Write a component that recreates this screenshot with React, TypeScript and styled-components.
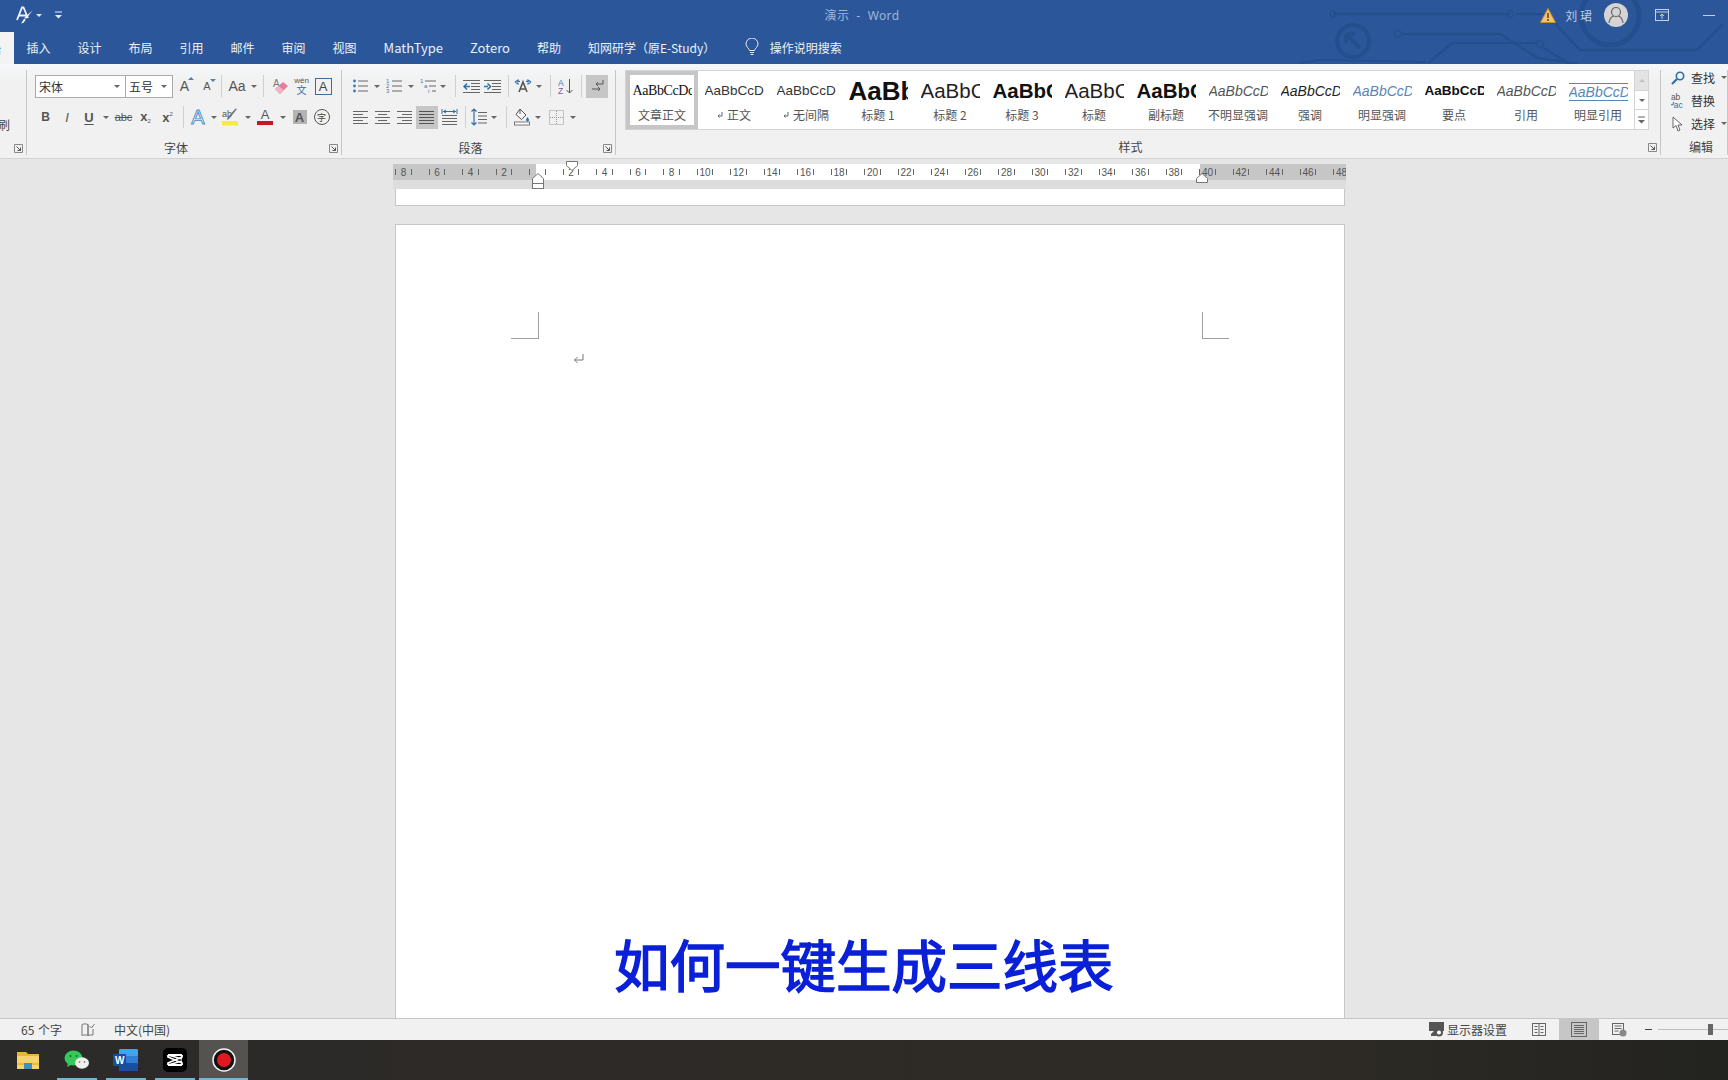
import React from "react";
import styled, { createGlobalStyle } from "styled-components";

const SANS = `"Noto Sans CJK SC", "Noto Sans", sans-serif`;
const LATIN = `"Liberation Sans", "Noto Sans CJK SC", sans-serif`;

const GlobalStyle = createGlobalStyle`
  html, body {
    margin: 0;
    padding: 0;
    overflow: hidden;
    background: #e6e6e6;
    font-family: ${SANS};
  }
  svg { display: block; }
`;

const TABS = ["插入", "设计", "布局", "引用", "邮件", "审阅", "视图", "MathType", "Zotero", "帮助", "知网研学（原E-Study）"];

const STYLES = [
  { label: "文章正文", sample: "AaBbCcDd", kind: "serif" },
  { label: "正文", sample: "AaBbCcDd", kind: "plain", mark: true },
  { label: "无间隔", sample: "AaBbCcDd", kind: "plain", mark: true },
  { label: "标题 1", sample: "AaBbC", kind: "h1" },
  { label: "标题 2", sample: "AaBbC", kind: "h2" },
  { label: "标题 3", sample: "AaBbC", kind: "h3" },
  { label: "标题", sample: "AaBbC", kind: "h2" },
  { label: "副标题", sample: "AaBbC", kind: "h3" },
  { label: "不明显强调", sample: "AaBbCcDd", kind: "subtle" },
  { label: "强调", sample: "AaBbCcDd", kind: "em" },
  { label: "明显强调", sample: "AaBbCcDd", kind: "blue" },
  { label: "要点", sample: "AaBbCcDd", kind: "strong" },
  { label: "引用", sample: "AaBbCcDd", kind: "subtle" },
  { label: "明显引用", sample: "AaBbCcDd", kind: "quote" },
];

const RULER = [8, 6, 4, 2, 0, ...Array.from({ length: 24 }, (_, i) => (i + 1) * 2)];

/* ---------- layout ---------- */

const Screen = styled.div`
  width: 1728px;
  height: 1080px;
  display: flex;
  flex-direction: column;
  overflow: hidden;
  background: #e6e6e6;
`;

const Header = styled.header`
  position: relative;
  height: 64px;
  flex: none;
  background: #2b579a;
`;

const Circuit = styled.svg`
  position: absolute;
  right: 0;
  top: 0;
`;

const TitleRow = styled.div`
  position: relative;
  height: 30px;
  margin-bottom: 2px;
  display: grid;
  grid-template-columns: 1fr auto 1fr;
  align-items: center;
`;

const QuickAccess = styled.div`
  display: flex;
  align-items: center;
  padding-left: 16px;
`;

const DocTitle = styled.div`
  font-size: 12px;
  color: #9fb5d6;
  letter-spacing: 0.4px;
  margin-right: 4px;
  white-space: pre;
  font-family: "Noto Sans", "Noto Sans CJK SC", sans-serif;
`;

const Account = styled.div`
  display: flex;
  align-items: center;
  justify-content: flex-end;
  padding-right: 13px;
`;

const UserName = styled.span`
  font-size: 12px;
  color: #b9cbe4;
  margin: 0 12px 0 9px;
  white-space: pre;
`;

const Avatar = styled.div`
  width: 24px;
  height: 24px;
  border-radius: 50%;
  background: #d4d4d4;
  display: flex;
  align-items: center;
  justify-content: center;
  margin-right: 27px;
`;

const Minimize = styled.div`
  width: 12px;
  height: 1px;
  background: #c4d2e6;
  margin-left: 34px;
`;

const TabRow = styled.nav`
  position: relative;
  height: 32px;
  box-sizing: border-box;
  display: flex;
  align-items: center;
`;

const HomeTab = styled.div`
  width: 14px;
  height: 100%;
  background: #f3f3f3;
  overflow: hidden;
  display: flex;
  align-items: center;
  font-size: 12px;
  color: #2b579a;
  margin-right: -1px;
  span {
    margin-left: -11px;
  }
`;

const Tab = styled.div<{ $latin?: boolean }>`
  padding: 0 13.5px 2px;
  font-size: ${(p) => (p.$latin ? "13px" : "12px")};
  color: #eef2f8;
  white-space: nowrap;
`;

const SearchHint = styled.div`
  display: flex;
  align-items: center;
  gap: 11px;
  margin-left: 16px;
  padding-bottom: 2px;
  font-size: 12px;
  color: #eef2f8;
`;

const Ribbon = styled.section`
  height: 95px;
  flex: none;
  display: flex;
  background: linear-gradient(#f5f7f9, #f1f1f1 20%);
  border-bottom: 1px solid #d2d2d2;
  box-sizing: border-box;
  color: #444;
`;

const Group = styled.div<{ $w: number; $left?: number }>`
  width: ${(p) => p.$w}px;
  flex: none;
  box-sizing: border-box;
  position: relative;
  display: flex;
  flex-direction: column;
  padding: 11px 0 0 ${(p) => p.$left ?? 0}px;
  &::after {
    content: "";
    position: absolute;
    right: 0;
    top: 6px;
    bottom: 3px;
    width: 1px;
    background: #c6c6c6;
  }
`;

const ToolRow = styled.div`
  height: 22px;
  display: flex;
  align-items: center;
  & + & {
    margin-top: 9px;
  }
`;

const GroupFoot = styled.div<{ $top?: number }>`
  height: 18px;
  margin-top: ${(p) => p.$top ?? 11}px;
  margin-right: 1px;
  display: flex;
  align-items: center;
`;

const GroupLabel = styled.div`
  flex: 1;
  text-align: center;
  font-size: 12px;
  color: #444;
  padding-right: 8px;
  margin-top: -2px;
`;

const Launcher = styled.div`
  width: 16px;
  flex: none;
  display: flex;
  justify-content: center;
`;

const ClippedLabel = styled.div`
  height: 22px;
  margin-top: 39px;
  font-size: 12px;
  line-height: 22px;
  color: #444;
  overflow: hidden;
  direction: rtl;
  padding-right: 17px;
`;

const Combo = styled.div<{ $w: number }>`
  width: ${(p) => p.$w}px;
  height: 23px;
  box-sizing: border-box;
  border: 1px solid #ababab;
  background: #fff;
  display: flex;
  align-items: center;
  justify-content: space-between;
  padding: 0 5px 0 3px;
  font-size: 12px;
  color: #333;
  & + & {
    margin-left: -1px;
  }
`;

const Tool = styled.div<{ $w?: number; $on?: boolean }>`
  width: ${(p) => p.$w ?? 22}px;
  height: 23px;
  flex: none;
  display: flex;
  align-items: center;
  justify-content: center;
  background: ${(p) => (p.$on ? "#c6c6c6" : "transparent")};
`;

const Caret = styled.i`
  display: block;
  width: 0;
  height: 0;
  border-left: 3px solid transparent;
  border-right: 3px solid transparent;
  border-top: 3px solid #666;
`;

const Sep = styled.i`
  display: block;
  width: 1px;
  height: 22px;
  background: #d0d0d0;
`;

const Glyph = styled.span<{ $size?: number; $color?: string; $weight?: number; $italic?: boolean }>`
  font-family: ${LATIN};
  font-size: ${(p) => p.$size ?? 13}px;
  font-weight: ${(p) => p.$weight ?? 400};
  font-style: ${(p) => (p.$italic ? "italic" : "normal")};
  color: ${(p) => p.$color ?? "#555"};
  line-height: 1;
`;

const Grow = styled(Glyph)<{ $down?: boolean }>`
  position: relative;
  &::after {
    content: "";
    position: absolute;
    right: -5px;
    top: -2px;
    border-left: 3px solid transparent;
    border-right: 3px solid transparent;
    border-${(p) => (p.$down ? "top" : "bottom")}: 3px solid #5a7fa8;
  }
`;

const Sub = styled.sub`
  font-size: 6px;
  vertical-align: -2px;
  font-weight: 400;
`;

const Sup = styled.sup`
  font-size: 6px;
  vertical-align: 6px;
  font-weight: 400;
`;

const Strike = styled(Glyph)`
  font-size: 11px;
  text-decoration: line-through;
`;

const Under = styled(Glyph)`
  font-weight: 700;
  text-decoration: underline;
  text-underline-offset: 2px;
`;

const Wen = styled.div`
  display: flex;
  flex-direction: column;
  align-items: center;
  color: #2f6fa8;
  line-height: 10px;
  font-size: 10px;
  small {
    font-family: ${LATIN};
    font-size: 8px;
    line-height: 8px;
    color: #555;
  }
`;

const BoxedA = styled.div`
  width: 15px;
  height: 15px;
  border: 1px solid #3d6d9e;
  display: flex;
  align-items: center;
  justify-content: center;
  font-family: ${LATIN};
  font-size: 13px;
  color: #444;
`;

const GlowA = styled(Glyph)`
  font-size: 20px;
  color: #eaf2fa;
  -webkit-text-stroke: 0.9px #4f8cc6;
`;

const ColorA = styled.div`
  width: 16px;
  display: flex;
  flex-direction: column;
  align-items: center;
  font-family: ${LATIN};
  font-size: 13px;
  line-height: 12px;
  color: #555;
  &::after {
    content: "";
    width: 100%;
    height: 4px;
    background: #c5181f;
  }
`;

const ShadedA = styled.div`
  width: 14px;
  height: 14px;
  background: #b4b4b4;
  display: flex;
  align-items: center;
  justify-content: center;
  font-family: ${LATIN};
  font-size: 13px;
  font-weight: 700;
  color: #555;
`;

const Ringed = styled.div`
  width: 14px;
  height: 14px;
  border-radius: 50%;
  border: 1px solid #555;
  display: flex;
  align-items: center;
  justify-content: center;
  font-size: 9px;
  color: #444;
`;

const StylesBody = styled.div`
  display: flex;
  height: 60px;
  margin-top: -5px;
`;

const Gallery = styled.div`
  display: flex;
  box-sizing: border-box;
  background: #fff;
  border: 1px solid #d4d4d4;
  border-right: none;
`;

const StyleItem = styled.div<{ $on?: boolean }>`
  width: 72px;
  flex: none;
  display: flex;
  flex-direction: column;
  align-items: center;
  box-sizing: border-box;
  box-shadow: ${(p) => (p.$on ? "inset 0 0 0 4px #c6c6c6" : "none")};
`;

const SAMPLE_CSS: Record<string, string> = {
  serif: `font-family: "Liberation Serif", serif; font-size: 14px; color: #111; letter-spacing: -0.4px;`,
  plain: `font-size: 13.5px; color: #333;`,
  h1: `font-size: 26px; font-weight: 700; color: #111;`,
  h2: `font-size: 20.5px; color: #222;`,
  h3: `font-size: 20.5px; font-weight: 700; color: #111;`,
  subtle: `font-size: 14px; font-style: italic; color: #555;`,
  em: `font-size: 14px; font-style: italic; color: #222;`,
  blue: `font-size: 14px; font-style: italic; color: #5b85b5;`,
  strong: `font-size: 13.5px; font-weight: 700; color: #111;`,
  quote: `font-size: 14px; font-style: italic; color: #5b85b5; border-top: 1px solid #5b85b5; border-bottom: 1px solid #5b85b5; line-height: 16px !important; margin-top: 12px; height: 16px !important;`,
};

const Sample = styled.div<{ $kind: string }>`
  width: 59px;
  height: 36px;
  line-height: 40px;
  overflow: hidden;
  white-space: nowrap;
  font-family: ${LATIN};
  ${(p) => SAMPLE_CSS[p.$kind]}
`;

const SampleSlot = styled.div`
  height: 36px;
`;

const StyleLabel = styled.div`
  height: 16px;
  line-height: 16px;
  font-size: 12px;
  color: #555;
  white-space: nowrap;
  display: flex;
  align-items: center;
  gap: 4px;
  font-family: "Noto Sans CJK SC", "Noto Sans", sans-serif;
`;

const GalleryScroll = styled.div`
  width: 15px;
  display: flex;
  flex-direction: column;
  box-sizing: border-box;
  border: 1px solid #d4d4d4;
  background: #fff;
`;

const ScrollBtn = styled.div<{ $off?: boolean }>`
  flex: 1;
  display: flex;
  align-items: center;
  justify-content: center;
  background: ${(p) => (p.$off ? "#e4e4e4" : "#fff")};
  & + & {
    border-top: 1px solid #d4d4d4;
  }
`;

const EditList = styled.div`
  display: flex;
  flex-direction: column;
  margin-top: -9px;
  padding-left: 9px;
`;

const EditRow = styled.div`
  height: 23px;
  display: flex;
  align-items: center;
  gap: 6px;
  font-size: 12px;
  color: #333;
  white-space: nowrap;
`;

const EditIcon = styled.div`
  width: 15px;
  display: flex;
  justify-content: center;
`;

const EditFoot = styled.div`
  margin-top: 3px;
  height: 18px;
  line-height: 18px;
  text-align: center;
  font-size: 12px;
  color: #444;
  padding-left: 13px;
`;

const Workspace = styled.main`
  flex: 1;
  min-height: 0;
  overflow: hidden;
  padding-top: 5px;
  background: #e6e6e6;
`;

const Column = styled.div`
  position: relative;
  width: 953px;
  margin-left: 393px;
`;

const Ruler = styled.div`
  height: 16px;
  overflow: hidden;
  background: linear-gradient(90deg, #c6c6c6 143px, #fff 143px, #fff 807px, #c6c6c6 807px);
`;

const RulerTrack = styled.div`
  display: flex;
  margin-left: -6.25px;
  width: 1000px;
`;

const RulerCell = styled.div`
  width: 33.5px;
  height: 16px;
  flex: none;
  box-sizing: border-box;
  padding: 0 8.5px;
  display: flex;
  align-items: center;
  justify-content: space-between;
  font-family: ${LATIN};
  font-size: 10px;
  color: #555;
  i {
    display: block;
    width: 1px;
    height: 6px;
    background: #666;
  }
`;

const RulerShadow = styled.div`
  height: 9px;
  background: #dddddd;
`;

const Marker = styled.svg<{ $x: number; $y: number }>`
  position: absolute;
  left: ${(p) => p.$x}px;
  top: ${(p) => p.$y}px;
`;

const PageTail = styled.div`
  width: 950px;
  height: 17px;
  margin-left: 2px;
  box-sizing: border-box;
  background: #fff;
  border: 1px solid #c6c6c6;
  border-top: none;
`;

const Page = styled.div`
  position: relative;
  width: 950px;
  height: 900px;
  margin: 18px 0 0 2px;
  box-sizing: border-box;
  background: #fff;
  border: 1px solid #c6c6c6;
  padding: 87px 115px 0;
`;

const CropRow = styled.div`
  display: flex;
  justify-content: space-between;
`;

const CropMark = styled.div<{ $right?: boolean }>`
  width: ${(p) => (p.$right ? 27 : 28)}px;
  height: 27px;
  box-sizing: border-box;
  border-bottom: 1px solid #a0a0a0;
  border-${(p) => (p.$right ? "left" : "right")}: 1px solid #a0a0a0;
`;

const ParaMark = styled.div`
  margin: 15px 0 0 62px;
`;

const Caption = styled.div`
  position: absolute;
  left: 218px;
  top: 707px;
  font-size: 55.5px;
  line-height: 62px;
  font-weight: 400;
  color: #0a20d8;
  -webkit-text-stroke: 1.5px #0a20d8;
  white-space: nowrap;
`;

const StatusBar = styled.footer`
  height: 22px;
  flex: none;
  display: flex;
  align-items: stretch;
  background: #f1f1f1;
  border-top: 1px solid #c6c6c6;
  box-sizing: border-box;
  font-size: 12px;
  color: #444;
`;

const StatusLeft = styled.div`
  display: flex;
  align-items: center;
  padding-left: 21px;
  flex: 1;
`;

const StatusText = styled.span`
  white-space: nowrap;
  word-spacing: 1px;
`;

const StatusRight = styled.div`
  display: flex;
  align-items: center;
`;

const ViewBtn = styled.div<{ $on?: boolean }>`
  width: 40px;
  height: 100%;
  display: flex;
  align-items: center;
  justify-content: center;
  background: ${(p) => (p.$on ? "#c6c6c6" : "transparent")};
`;

const DisplaySetting = styled.div`
  display: flex;
  align-items: center;
  gap: 3px;
  margin-right: 12px;
`;

const Zoomer = styled.div`
  width: 89px;
  position: relative;
  display: flex;
  align-items: center;
  height: 100%;
  font-family: ${LATIN};
  &::before {
    content: "";
    width: 7px;
    height: 1px;
    background: #444;
    margin-left: 6px;
    margin-right: 6px;
  }
  &::after {
    content: "";
    flex: 1;
    height: 1px;
    background: #bdbdbd;
  }
`;

const ZoomThumb = styled.i`
  position: absolute;
  left: 69px;
  top: 5px;
  width: 5px;
  height: 11px;
  background: #666;
`;

const Taskbar = styled.footer`
  height: 40px;
  flex: none;
  display: flex;
  padding-left: 3px;
  background: linear-gradient(90deg, #2b2b2a, #2d2a27 30%, #2e2b26 75%, #23231f);
`;

const TaskItem = styled.div<{ $open?: boolean; $on?: boolean }>`
  position: relative;
  width: 49px;
  height: 40px;
  display: flex;
  align-items: center;
  justify-content: center;
  background: ${(p) => (p.$on ? "#55534f" : "transparent")};
  &::after {
    content: "";
    display: ${(p) => (p.$open ? "block" : "none")};
    position: absolute;
    bottom: 0;
    left: ${(p) => (p.$on ? 0 : 4.5)}px;
    right: ${(p) => (p.$on ? 0 : 4.5)}px;
    height: 2px;
    background: #78b4d2;
  }
`;

/* ---------- drawings ---------- */

type Row = [number, number];

const Lines = ({ rows, color = "#666", w = 16 }: { rows: Row[]; color?: string; w?: number }) => (
  <svg width={w} height="15" viewBox={`0 0 ${w} 15`}>
    {rows.map(([a, b], i) => (
      <line key={i} x1={a} x2={b} y1={1.5 + i * 3} y2={1.5 + i * 3} stroke={color} strokeWidth="1" />
    ))}
  </svg>
);

const BulletIcon = () => (
  <svg width="16" height="16" viewBox="0 0 16 16">
    {[3, 8, 13].map((y) => (
      <g key={y}>
        <circle cx="2.5" cy={y} r="1.4" fill="#3f78ad" />
        <line x1="6" x2="16" y1={y} y2={y} stroke="#666" />
      </g>
    ))}
  </svg>
);

const NumberIcon = () => (
  <svg width="16" height="16" viewBox="0 0 16 16">
    {[1, 2, 3].map((n, i) => (
      <g key={n}>
        <text x="0" y={5 + i * 5} fontSize="6" fill="#3f78ad" fontFamily="Liberation Sans">{n}</text>
        <line x1="6" x2="16" y1={3 + i * 5} y2={3 + i * 5} stroke="#666" />
      </g>
    ))}
  </svg>
);

const MultiIcon = () => (
  <svg width="16" height="16" viewBox="0 0 16 16">
    <text x="0" y="5" fontSize="6" fill="#3f78ad" fontFamily="Liberation Sans">1</text>
    <line x1="5" x2="16" y1="3" y2="3" stroke="#666" />
    <text x="4" y="10" fontSize="6" fill="#3f78ad" fontFamily="Liberation Sans">a</text>
    <line x1="9" x2="16" y1="8" y2="8" stroke="#666" />
    <text x="8" y="15" fontSize="6" fill="#3f78ad" fontFamily="Liberation Sans">i</text>
    <line x1="12" x2="16" y1="13" y2="13" stroke="#666" />
  </svg>
);

const IndentIcon = ({ flip }: { flip?: boolean }) => (
  <svg width="17" height="15" viewBox="0 0 17 15">
    <line x1="0" x2="17" y1="1.5" y2="1.5" stroke="#666" />
    <line x1="0" x2="17" y1="13.5" y2="13.5" stroke="#666" />
    {[4.5, 7.5, 10.5].map((y) => (
      <line key={y} x1="8" x2="17" y1={y} y2={y} stroke="#666" />
    ))}
    {flip ? (
      <path d="M0 7.5h4M3.5 4.5l3 3-3 3" fill="none" stroke="#2f6fa8" strokeWidth="1.5" />
    ) : (
      <path d="M7 7.5H2M4 4.5l-3 3 3 3" fill="none" stroke="#2f6fa8" strokeWidth="1.5" />
    )}
  </svg>
);

const AsianLayoutIcon = () => (
  <svg width="18" height="16" viewBox="0 0 18 16">
    <path d="M5 14l4-10 4 10M6.5 11h5" fill="none" stroke="#555" strokeWidth="1.6" />
    <path d="M1 4l3-2v1.4h2M1 4l3 2V4.6M17 4l-3-2v1.4h-2M17 4l-3 2V4.6" fill="none" stroke="#2f6fa8" strokeWidth="1.1" />
  </svg>
);

const SortIcon = () => (
  <svg width="16" height="17" viewBox="0 0 16 17">
    <text x="0" y="7.5" fontSize="8.5" fill="#3f78ad" fontFamily="Liberation Sans">A</text>
    <text x="0" y="16" fontSize="8.5" fill="#7d5aa6" fontFamily="Liberation Sans">Z</text>
    <path d="M11.5 1v14M8.5 12l3 3 3-3" fill="none" stroke="#555" />
  </svg>
);

const ReturnArrows = () => (
  <svg width="13" height="15" viewBox="0 0 13 15">
    <path d="M12 1v4H5M7 3L5 5l2 2" fill="none" stroke="#555" />
    <path d="M1 10h8M7 8l2 2-2 2" fill="none" stroke="#555" />
  </svg>
);

const DistributeIcon = () => (
  <svg width="17" height="17" viewBox="0 0 17 17">
    <path d="M1 0v5M16 0v5M2 2.5h13M5 1L2.5 2.5 5 4M12 1l2.5 1.5L12 4" fill="none" stroke="#2f6fa8" />
    <path d="M1 6.5h15M1 9.5h15M1 12.5h15M1 15.5h15" stroke="#666" />
  </svg>
);

const SpacingIcon = () => (
  <svg width="16" height="18" viewBox="0 0 16 18">
    <path d="M3 1v16M.5 3.5L3 1l2.5 2.5M.5 14.5L3 17l2.5-2.5" fill="none" stroke="#2f6fa8" strokeWidth="1.2" />
    <path d="M7 4.5h9M7 8h9M7 11.5h9M7 15h9" stroke="#666" />
  </svg>
);

const ShadingIcon = () => (
  <svg width="17" height="18" viewBox="0 0 17 18">
    <path d="M6 1l6 6-4.5 4.5L2 6.5z" fill="#f6f6f6" stroke="#555" />
    <path d="M6 1v5" stroke="#555" />
    <path d="M13.5 9c1 1.6 1.5 2.3 1.5 3a1.4 1.4 0 0 1-2.9 0c0-.7.5-1.4 1.4-3z" fill="#2f6fa8" />
    <rect x="0.5" y="14" width="15" height="3" fill="#fff" stroke="#777" />
  </svg>
);

const BorderIcon = () => (
  <svg width="15" height="15" viewBox="0 0 15 15">
    <rect x="0.5" y="0.5" width="14" height="14" fill="none" stroke="#999" strokeDasharray="1 1" />
    <path d="M7.5 1v13M1 7.5h13" stroke="#999" strokeDasharray="1 1" />
  </svg>
);

const LauncherIcon = () => (
  <svg width="9" height="9" viewBox="0 0 9 9">
    <path d="M.5 8.5v-8h8v8z" fill="none" stroke="#888" />
    <path d="M2.5 2.5l4 4M6.5 3.5v3h-3" fill="none" stroke="#555" />
  </svg>
);

const BulbIcon = () => (
  <svg width="14" height="18" viewBox="0 0 14 18">
    <path d="M4.5 12.5C4 10 1 9 1 6a6 6 0 0 1 12 0c0 3-3 4-3.5 6.5z" fill="none" stroke="#e4ebf5" />
    <path d="M5 14.5h4M5.5 16.5h3" stroke="#e4ebf5" />
  </svg>
);

const PrintIcon = () => (
  <svg width="16" height="15" viewBox="0 0 16 15">
    <rect x="0.5" y="0.5" width="15" height="14" fill="none" stroke="#666" />
    {[3.5, 5.5, 7.5, 9.5, 11.5].map((y) => (
      <line key={y} x1="3" x2="13" y1={y} y2={y} stroke="#666" />
    ))}
  </svg>
);

const App = () => (
  <Screen>
    <GlobalStyle />
    <Header>
      <Circuit width="428" height="64" viewBox="0 0 428 64" fill="none" stroke="#244f8f">
        <path d="M33 14h177M216 14h30l34 36h117l26-26" strokeWidth="2.5" />
        <circle cx="33" cy="14" r="3" strokeWidth="1.5" />
        <circle cx="210" cy="14" r="3.5" strokeWidth="1.5" />
        <path d="M102 34h98l38 24 40 6" strokeWidth="2.5" />
        <circle cx="98" cy="34" r="3.5" strokeWidth="1.5" />
        <path d="M128 63l24-20h85M242 47l28 17" strokeWidth="2.5" />
        <circle cx="240" cy="44" r="3.5" strokeWidth="1.5" />
        <circle cx="53" cy="41" r="16" strokeWidth="4" />
        <path d="M46 34l14 14M46 34h9M46 34v9" strokeWidth="4" />
        <circle cx="310" cy="16" r="29" strokeWidth="5" />
        <path d="M0 63l20-3h6l100 2" strokeWidth="2" />
      </Circuit>
      <TitleRow>
        <QuickAccess>
          <svg width="18" height="18" viewBox="0 0 18 18">
            <path d="M1 14L6 1.5h1.5L12 12M3 9.5h7" fill="none" stroke="#eef2f8" strokeWidth="1.8" />
            <path d="M16.5 4.5L10 13l-1.6-1.4z" fill="#eef2f8" />
            <path d="M8.2 12.4l1.5 1.4-2 3-2.6.6z" fill="#eef2f8" />
          </svg>
          <Tool $w={10}>
            <Caret style={{ borderTopColor: "#dfe7f2" }} />
          </Tool>
          <Tool $w={28}>
            <svg width="7" height="8" viewBox="0 0 7 8">
              <path d="M0 1h7" stroke="#e8eef7" />
              <path d="M0 4h7L3.5 7.5z" fill="#e8eef7" />
            </svg>
          </Tool>
        </QuickAccess>
        <DocTitle>演示  -  Word</DocTitle>
        <Account>
          <svg width="16" height="15" viewBox="0 0 16 15">
            <path d="M8 .5l7.5 14H.5z" fill="#f0c26a" stroke="#c98d2e" />
            <path d="M8 5v5M8 11v2" stroke="#4a3a1a" strokeWidth="1.4" />
          </svg>
          <UserName>刘 珺</UserName>
          <Avatar>
            <svg width="16" height="18" viewBox="0 0 16 18" fill="none" stroke="#666" strokeWidth="1.2">
              <circle cx="8" cy="6" r="4.5" />
              <path d="M1 17c.5-4 2.5-6.5 5-7M15 17c-.5-4-2.5-6.5-5-7" />
            </svg>
          </Avatar>
          <svg width="14" height="12" viewBox="0 0 14 12" fill="none" stroke="#c4d2e6">
            <rect x="0.5" y="0.5" width="13" height="11" />
            <path d="M0.5 3h13M7 10V5M5 7l2-2 2 2" />
          </svg>
          <Minimize />
        </Account>
      </TitleRow>
      <TabRow>
        <HomeTab>
          <span>始</span>
        </HomeTab>
        {TABS.map((t) => (
          <Tab key={t} $latin={t === "MathType" || t === "Zotero"}>
            {t}
          </Tab>
        ))}
        <SearchHint>
          <BulbIcon />
          操作说明搜索
        </SearchHint>
      </TabRow>
    </Header>

    <Ribbon>
      <Group $w={27}>
        <ClippedLabel>刷</ClippedLabel>
        <GroupFoot $top={3}>
          <Launcher style={{ marginLeft: "auto" }}>
            <LauncherIcon />
          </Launcher>
        </GroupFoot>
      </Group>

      <Group $w={315} $left={8}>
        <ToolRow>
          <Combo $w={91}>
            宋体
            <Caret />
          </Combo>
          <Combo $w={48}>
            五号
            <Caret />
          </Combo>
          <Tool $w={23}>
            <Grow $size={14}>A</Grow>
          </Tool>
          <Tool $w={22}>
            <Grow $size={11} $down>A</Grow>
          </Tool>
          <Tool $w={6}>
            <Sep />
          </Tool>
          <Tool $w={26}>
            <Glyph $size={14}>Aa</Glyph>
          </Tool>
          <Tool $w={7}>
            <Caret />
          </Tool>
          <Tool $w={12}>
            <Sep />
          </Tool>
          <Tool>
            <svg width="17" height="17" viewBox="0 0 17 17">
              <text x="1" y="9" fontSize="10" fill="#777" fontFamily="Liberation Sans">A</text>
              <path d="M3 11l8-7 5 4-8 8z" fill="#e47f98" />
              <path d="M3 11l3.5-3 5 4L8 16z" fill="#f0b6c5" />
            </svg>
          </Tool>
          <Tool $w={21}>
            <Wen>
              <small>wén</small>文
            </Wen>
          </Tool>
          <Tool>
            <BoxedA>A</BoxedA>
          </Tool>
        </ToolRow>
        <ToolRow>
          <Tool $w={21}>
            <Glyph $weight={700} $size={12}>B</Glyph>
          </Tool>
          <Tool>
            <Glyph $italic $size={13}>I</Glyph>
          </Tool>
          <Tool>
            <Under>U</Under>
          </Tool>
          <Tool $w={12}>
            <Caret />
          </Tool>
          <Tool $w={23}>
            <Strike>abc</Strike>
          </Tool>
          <Tool $w={21}>
            <Glyph $weight={700} $size={13}>
              x<Sub>2</Sub>
            </Glyph>
          </Tool>
          <Tool $w={23}>
            <Glyph $weight={700} $size={13}>
              x<Sup>2</Sup>
            </Glyph>
          </Tool>
          <Tool $w={8}>
            <Sep />
          </Tool>
          <Tool>
            <GlowA>A</GlowA>
          </Tool>
          <Tool $w={9}>
            <Caret />
          </Tool>
          <Tool $w={25}>
            <svg width="17" height="18" viewBox="0 0 17 18">
              <text x="0" y="9" fontSize="9" fill="#555" fontFamily="Liberation Sans">ab</text>
              <path d="M15 1L7 11l-2 1 .5-2.5 8-9z" fill="#777" />
              <rect x="0" y="13" width="16" height="4.5" fill="#f5ec43" />
            </svg>
          </Tool>
          <Tool $w={10}>
            <Caret />
          </Tool>
          <Tool $w={24}>
            <ColorA>A</ColorA>
          </Tool>
          <Tool $w={11}>
            <Caret />
          </Tool>
          <Tool $w={23}>
            <ShadedA>A</ShadedA>
          </Tool>
          <Tool $w={21}>
            <Ringed>字</Ringed>
          </Tool>
        </ToolRow>
        <GroupFoot>
          <GroupLabel>字体</GroupLabel>
          <Launcher>
            <LauncherIcon />
          </Launcher>
        </GroupFoot>
      </Group>

      <Group $w={274} $left={8}>
        <ToolRow>
          <Tool $w={20}>
            <BulletIcon />
          </Tool>
          <Tool $w={14}>
            <Caret />
          </Tool>
          <Tool $w={20}>
            <NumberIcon />
          </Tool>
          <Tool $w={14}>
            <Caret />
          </Tool>
          <Tool $w={19}>
            <MultiIcon />
          </Tool>
          <Tool $w={12}>
            <Caret />
          </Tool>
          <Tool $w={12}>
            <Sep />
          </Tool>
          <Tool $w={21}>
            <IndentIcon />
          </Tool>
          <Tool $w={21}>
            <IndentIcon flip />
          </Tool>
          <Tool $w={10}>
            <Sep />
          </Tool>
          <Tool $w={20}>
            <AsianLayoutIcon />
          </Tool>
          <Tool $w={11}>
            <Caret />
          </Tool>
          <Tool $w={12}>
            <Sep />
          </Tool>
          <Tool $w={20}>
            <SortIcon />
          </Tool>
          <Tool $w={10}>
            <Sep />
          </Tool>
          <Tool $on>
            <ReturnArrows />
          </Tool>
        </ToolRow>
        <ToolRow>
          <Tool>
            <Lines rows={[[0, 15], [0, 10], [0, 15], [0, 10], [0, 15]]} />
          </Tool>
          <Tool>
            <Lines rows={[[0, 15], [3, 12], [0, 15], [3, 12], [0, 15]]} />
          </Tool>
          <Tool>
            <Lines rows={[[0, 15], [5, 15], [0, 15], [5, 15], [0, 15]]} />
          </Tool>
          <Tool $on>
            <Lines rows={[[0, 15], [0, 15], [0, 15], [0, 15], [0, 15]]} color="#555" />
          </Tool>
          <Tool>
            <DistributeIcon />
          </Tool>
          <Tool $w={10}>
            <Sep />
          </Tool>
          <Tool $w={18}>
            <SpacingIcon />
          </Tool>
          <Tool $w={12}>
            <Caret />
          </Tool>
          <Tool $w={12}>
            <Sep />
          </Tool>
          <Tool $w={20}>
            <ShadingIcon />
          </Tool>
          <Tool $w={12}>
            <Caret />
          </Tool>
          <Tool $w={24}>
            <BorderIcon />
          </Tool>
          <Tool $w={10}>
            <Caret />
          </Tool>
        </ToolRow>
        <GroupFoot>
          <GroupLabel>段落</GroupLabel>
          <Launcher>
            <LauncherIcon />
          </Launcher>
        </GroupFoot>
      </Group>

      <Group $w={1045} $left={9}>
        <StylesBody>
          <Gallery>
            {STYLES.map((s, i) => (
              <StyleItem key={s.label + i} $on={i === 0}>
                <SampleSlot>
                  <Sample $kind={s.kind}>{s.sample}</Sample>
                </SampleSlot>
                <StyleLabel>
                  {s.mark && (
                    <svg width="6" height="7" viewBox="0 0 6 7">
                      <path d="M5 0v4H1M2.5 2.5L1 4l1.5 1.5" fill="none" stroke="#666" />
                    </svg>
                  )}
                  {s.label}
                </StyleLabel>
              </StyleItem>
            ))}
          </Gallery>
          <GalleryScroll>
            <ScrollBtn $off>
              <Caret style={{ transform: "rotate(180deg)", borderTopColor: "#c0c0c0" }} />
            </ScrollBtn>
            <ScrollBtn>
              <Caret />
            </ScrollBtn>
            <ScrollBtn>
              <svg width="7" height="8" viewBox="0 0 7 8">
                <path d="M0 1h7" stroke="#666" />
                <path d="M0 4h7L3.5 7.5z" fill="#666" />
              </svg>
            </ScrollBtn>
          </GalleryScroll>
        </StylesBody>
        <GroupFoot $top={8}>
          <GroupLabel>样式</GroupLabel>
          <Launcher>
            <LauncherIcon />
          </Launcher>
        </GroupFoot>
      </Group>

      <Group $w={67}>
        <EditList>
          <EditRow>
            <EditIcon>
              <svg width="14" height="14" viewBox="0 0 14 14">
                <circle cx="9" cy="5" r="3.7" fill="none" stroke="#2f6fa8" strokeWidth="1.6" />
                <path d="M6 8l-5 5" stroke="#2f6fa8" strokeWidth="2.2" />
              </svg>
            </EditIcon>
            查找
            <Caret />
          </EditRow>
          <EditRow>
            <EditIcon>
              <svg width="16" height="16" viewBox="0 0 16 16">
                <text x="1" y="7" fontSize="9" fill="#555" fontFamily="Liberation Sans">ab</text>
                <text x="4" y="15" fontSize="9" fill="#2f6fa8" fontFamily="Liberation Sans">ac</text>
                <path d="M3.5 9v3H1" fill="none" stroke="#2f6fa8" />
              </svg>
            </EditIcon>
            替换
          </EditRow>
          <EditRow>
            <EditIcon>
              <svg width="12" height="16" viewBox="0 0 12 16">
                <path d="M1 1v11l3-2.5L6 15l2-1-2-5h4z" fill="#fff" stroke="#666" />
              </svg>
            </EditIcon>
            选择
            <Caret />
          </EditRow>
        </EditList>
        <EditFoot>编辑</EditFoot>
      </Group>
    </Ribbon>

    <Workspace>
      <Column>
        <Ruler>
          <RulerTrack>
            {RULER.map((n, i) => (
              <RulerCell key={i}>
                <i />
                {n > 0 ? n : ""}
                <i />
              </RulerCell>
            ))}
          </RulerTrack>
        </Ruler>
        <RulerShadow />
        <Marker $x={173} $y={-3} width="12" height="10" viewBox="0 0 12 10">
          <path d="M.5.5h11v4L6 9.5.5 4.5z" fill="#fff" stroke="#777" />
        </Marker>
        <Marker $x={139} $y={9} width="12" height="16" viewBox="0 0 12 16">
          <path d="M.5 10.5v-5L6 .5l5.5 5v5z" fill="#fff" stroke="#777" />
          <rect x="0.5" y="10.5" width="11" height="5" fill="#fff" stroke="#777" />
        </Marker>
        <Marker $x={803} $y={9} width="12" height="10" viewBox="0 0 12 10">
          <path d="M.5 9.5v-4L6 .5l5.5 5v4z" fill="#fff" stroke="#777" />
        </Marker>
        <PageTail />
        <Page>
          <CropRow>
            <CropMark />
            <CropMark $right />
          </CropRow>
          <ParaMark>
            <svg width="11" height="10" viewBox="0 0 11 10">
              <path d="M10 0v6H1.5M4.5 3l-3 3 3 3" fill="none" stroke="#777" />
            </svg>
          </ParaMark>
          <Caption>如何一键生成三线表</Caption>
        </Page>
      </Column>
    </Workspace>

    <StatusBar>
      <StatusLeft>
        <StatusText>65 个字</StatusText>
        <svg width="15" height="14" viewBox="0 0 15 14" style={{ margin: "0 18px 0 19px" }}>
          <path d="M1 1.5c2-.8 4-.8 6 0v11c-2-.8-4-.8-6 0zM7 1.5V12.5c1.5-.6 3-.8 5-.5V6" fill="none" stroke="#777" />
          <path d="M8.5 3l2 2 3-4" fill="none" stroke="#777" />
        </svg>
        <StatusText>中文(中国)</StatusText>
      </StatusLeft>
      <StatusRight>
        <DisplaySetting>
          <svg width="15" height="15" viewBox="0 0 15 15">
            <rect x="0" y="0" width="15" height="9" fill="#555" />
            <path d="M2 12l3-3h2v5H2z" fill="#555" />
            <circle cx="10" cy="10.5" r="3" fill="#fff" stroke="#555" strokeWidth="2" />
          </svg>
          显示器设置
        </DisplaySetting>
        <ViewBtn>
          <svg width="14" height="13" viewBox="0 0 14 13" fill="none" stroke="#666">
            <rect x="0.5" y="0.5" width="13" height="12" />
            <path d="M7 .5v12M2.5 3.5h3M2.5 6.5h3M2.5 9.5h3M8.5 3.5h3M8.5 6.5h3M8.5 9.5h3" />
          </svg>
        </ViewBtn>
        <ViewBtn $on>
          <PrintIcon />
        </ViewBtn>
        <ViewBtn>
          <svg width="15" height="14" viewBox="0 0 15 14">
            <rect x="0.5" y="0.5" width="11" height="11" fill="none" stroke="#666" />
            <path d="M2.5 3h7M2.5 5.5h7M2.5 8h4" stroke="#666" />
            <circle cx="11" cy="10" r="3.5" fill="#888" />
          </svg>
        </ViewBtn>
        <Zoomer>
          <ZoomThumb />
        </Zoomer>
      </StatusRight>
    </StatusBar>

    <Taskbar>
      <TaskItem>
        <svg width="22" height="20" viewBox="0 0 22 20">
          <path d="M0 2h9l2 2h11v4H0z" fill="#e8b53d" />
          <rect x="0" y="6" width="22" height="13" fill="#f6d36b" />
          <rect x="7" y="13" width="8" height="6" fill="#3f8fc4" />
          <rect x="0" y="13" width="7" height="2" fill="#e6bb4a" />
          <rect x="15" y="13" width="7" height="2" fill="#e6bb4a" />
        </svg>
      </TaskItem>
      <TaskItem $open>
        <svg width="25" height="20" viewBox="0 0 25 20">
          <ellipse cx="9.5" cy="8" rx="9" ry="7.5" fill="#35c85a" />
          <path d="M4 13l-1 4 5-2.5z" fill="#35c85a" />
          <circle cx="6.5" cy="6" r="1.1" fill="#176a30" />
          <circle cx="12.5" cy="6" r="1.1" fill="#176a30" />
          <ellipse cx="18" cy="13" rx="7" ry="5.8" fill="#eef0ee" />
          <circle cx="15.5" cy="12" r="0.9" fill="#888" />
          <circle cx="20.5" cy="12" r="0.9" fill="#888" />
        </svg>
      </TaskItem>
      <TaskItem $open>
        <svg width="25" height="22" viewBox="0 0 25 22">
          <rect x="6" y="0" width="19" height="22" rx="1.5" fill="#2f7fd6" />
          <rect x="6" y="0" width="19" height="7" rx="1.5" fill="#41a5ee" />
          <rect x="6" y="14" width="19" height="8" rx="1.5" fill="#1a4fa0" />
          <rect x="0" y="5" width="13" height="12" rx="1" fill="#174d9e" />
          <text x="2" y="15" fontSize="10" fontWeight="700" fill="#fff" fontFamily="Liberation Sans">W</text>
        </svg>
      </TaskItem>
      <TaskItem $open>
        <svg width="24" height="24" viewBox="0 0 24 24">
          <rect width="24" height="24" rx="5" fill="#000" />
          <path d="M5 7l14 4M5 17l14-4M5 7v2l14 6v2M19 7v2L5 15v2M5 7h14M5 17h14" fill="none" stroke="#fff" strokeWidth="1.8" />
        </svg>
      </TaskItem>
      <TaskItem $open $on>
        <svg width="24" height="24" viewBox="0 0 24 24">
          <circle cx="12" cy="12" r="11" fill="#111" stroke="#f2f2f2" strokeWidth="1.5" />
          <circle cx="12" cy="12" r="7" fill="#e01822" />
        </svg>
      </TaskItem>
    </Taskbar>
  </Screen>
);

export default App;
